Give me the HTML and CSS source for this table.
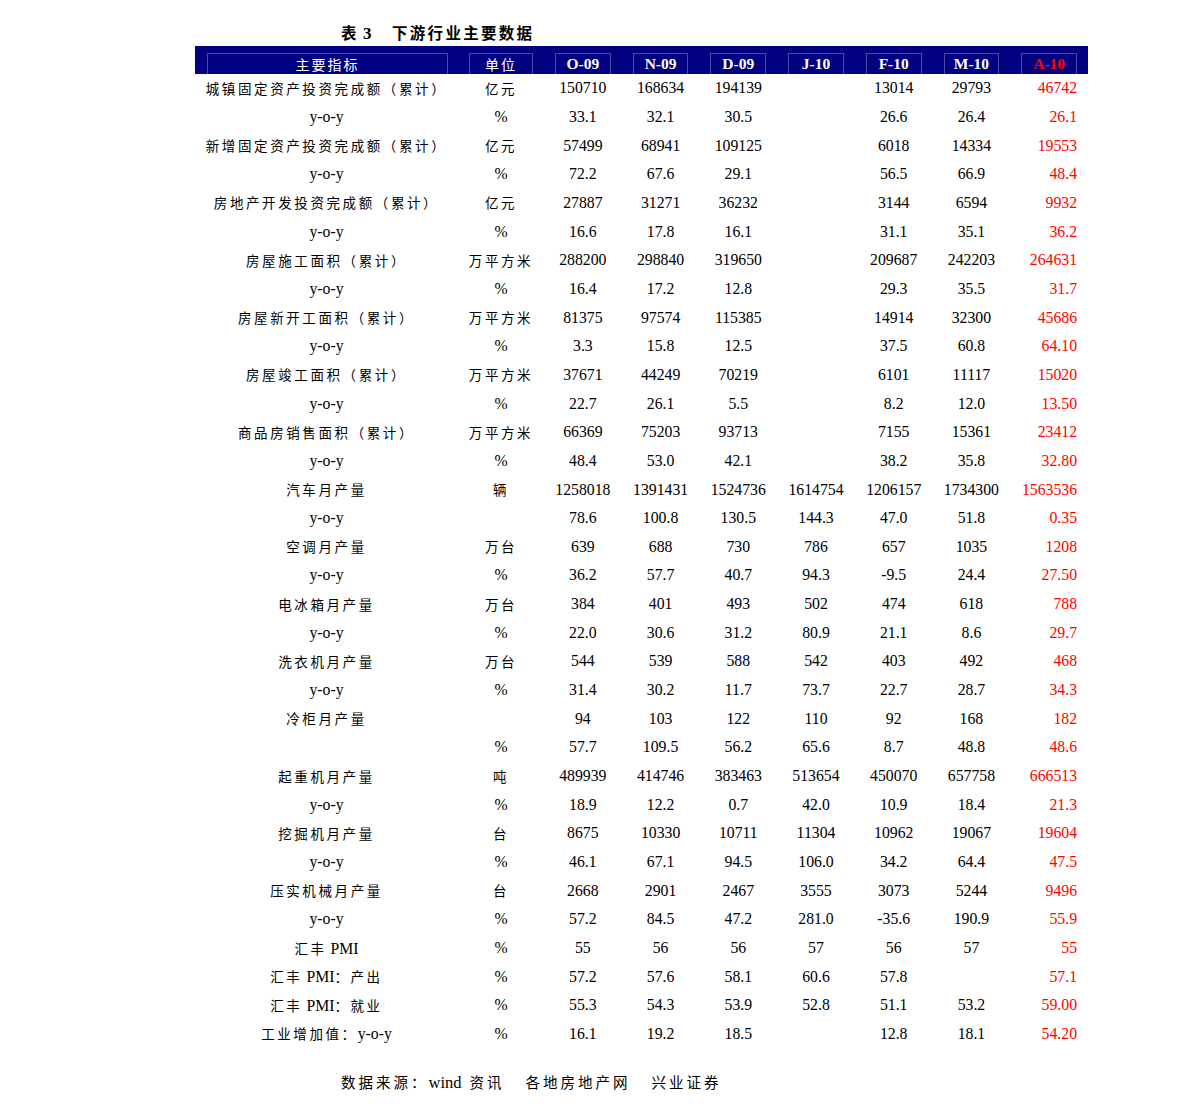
FILE: index.html
```html
<!DOCTYPE html>
<html lang="zh-CN">
<head>
<meta charset="utf-8">
<title>下游行业主要数据</title>
<link rel="stylesheet" href="styles.css">
</head>
<body>
<div class="page">
  <div class="title"><span class="tnum"><span class="tzh">表</span> 3</span><span class="tzh">下游行业主要数据</span></div>
  <div class="table">
    <div class="head">
      <div class="hcell first"><span class="hbox zhh">主要指标</span></div>
      <div class="hcell"><span class="hbox zhh">单位</span></div>
      <div class="hcell"><span class="hbox">O-09</span></div>
      <div class="hcell"><span class="hbox">N-09</span></div>
      <div class="hcell"><span class="hbox">D-09</span></div>
      <div class="hcell"><span class="hbox">J-10</span></div>
      <div class="hcell"><span class="hbox">F-10</span></div>
      <div class="hcell"><span class="hbox">M-10</span></div>
      <div class="hcell"><span class="hbox red">A-10</span></div>
    </div>

    <div class="row"><div class="lbl"><span class="zh">城镇固定资产投资完成额（累计）</span></div><div class="unit"><span class="zh">亿元</span></div><div class="v">150710</div><div class="v">168634</div><div class="v">194139</div><div class="v"></div><div class="v">13014</div><div class="v">29793</div><div class="v last">46742</div></div>
    <div class="row"><div class="lbl">y-o-y</div><div class="unit">%</div><div class="v">33.1</div><div class="v">32.1</div><div class="v">30.5</div><div class="v"></div><div class="v">26.6</div><div class="v">26.4</div><div class="v last">26.1</div></div>
    <div class="row"><div class="lbl"><span class="zh">新增固定资产投资完成额（累计）</span></div><div class="unit"><span class="zh">亿元</span></div><div class="v">57499</div><div class="v">68941</div><div class="v">109125</div><div class="v"></div><div class="v">6018</div><div class="v">14334</div><div class="v last">19553</div></div>
    <div class="row"><div class="lbl">y-o-y</div><div class="unit">%</div><div class="v">72.2</div><div class="v">67.6</div><div class="v">29.1</div><div class="v"></div><div class="v">56.5</div><div class="v">66.9</div><div class="v last">48.4</div></div>
    <div class="row"><div class="lbl"><span class="zh">房地产开发投资完成额（累计）</span></div><div class="unit"><span class="zh">亿元</span></div><div class="v">27887</div><div class="v">31271</div><div class="v">36232</div><div class="v"></div><div class="v">3144</div><div class="v">6594</div><div class="v last">9932</div></div>
    <div class="row"><div class="lbl">y-o-y</div><div class="unit">%</div><div class="v">16.6</div><div class="v">17.8</div><div class="v">16.1</div><div class="v"></div><div class="v">31.1</div><div class="v">35.1</div><div class="v last">36.2</div></div>
    <div class="row"><div class="lbl"><span class="zh">房屋施工面积（累计）</span></div><div class="unit"><span class="zh">万平方米</span></div><div class="v">288200</div><div class="v">298840</div><div class="v">319650</div><div class="v"></div><div class="v">209687</div><div class="v">242203</div><div class="v last">264631</div></div>
    <div class="row"><div class="lbl">y-o-y</div><div class="unit">%</div><div class="v">16.4</div><div class="v">17.2</div><div class="v">12.8</div><div class="v"></div><div class="v">29.3</div><div class="v">35.5</div><div class="v last">31.7</div></div>
    <div class="row"><div class="lbl"><span class="zh">房屋新开工面积（累计）</span></div><div class="unit"><span class="zh">万平方米</span></div><div class="v">81375</div><div class="v">97574</div><div class="v">115385</div><div class="v"></div><div class="v">14914</div><div class="v">32300</div><div class="v last">45686</div></div>
    <div class="row"><div class="lbl">y-o-y</div><div class="unit">%</div><div class="v">3.3</div><div class="v">15.8</div><div class="v">12.5</div><div class="v"></div><div class="v">37.5</div><div class="v">60.8</div><div class="v last">64.10</div></div>
    <div class="row"><div class="lbl"><span class="zh">房屋竣工面积（累计）</span></div><div class="unit"><span class="zh">万平方米</span></div><div class="v">37671</div><div class="v">44249</div><div class="v">70219</div><div class="v"></div><div class="v">6101</div><div class="v">11117</div><div class="v last">15020</div></div>
    <div class="row"><div class="lbl">y-o-y</div><div class="unit">%</div><div class="v">22.7</div><div class="v">26.1</div><div class="v">5.5</div><div class="v"></div><div class="v">8.2</div><div class="v">12.0</div><div class="v last">13.50</div></div>
    <div class="row"><div class="lbl"><span class="zh">商品房销售面积（累计）</span></div><div class="unit"><span class="zh">万平方米</span></div><div class="v">66369</div><div class="v">75203</div><div class="v">93713</div><div class="v"></div><div class="v">7155</div><div class="v">15361</div><div class="v last">23412</div></div>
    <div class="row"><div class="lbl">y-o-y</div><div class="unit">%</div><div class="v">48.4</div><div class="v">53.0</div><div class="v">42.1</div><div class="v"></div><div class="v">38.2</div><div class="v">35.8</div><div class="v last">32.80</div></div>
    <div class="row"><div class="lbl"><span class="zh">汽车月产量</span></div><div class="unit"><span class="zh">辆</span></div><div class="v">1258018</div><div class="v">1391431</div><div class="v">1524736</div><div class="v">1614754</div><div class="v">1206157</div><div class="v">1734300</div><div class="v last">1563536</div></div>
    <div class="row"><div class="lbl">y-o-y</div><div class="unit"></div><div class="v">78.6</div><div class="v">100.8</div><div class="v">130.5</div><div class="v">144.3</div><div class="v">47.0</div><div class="v">51.8</div><div class="v last">0.35</div></div>
    <div class="row"><div class="lbl"><span class="zh">空调月产量</span></div><div class="unit"><span class="zh">万台</span></div><div class="v">639</div><div class="v">688</div><div class="v">730</div><div class="v">786</div><div class="v">657</div><div class="v">1035</div><div class="v last">1208</div></div>
    <div class="row"><div class="lbl">y-o-y</div><div class="unit">%</div><div class="v">36.2</div><div class="v">57.7</div><div class="v">40.7</div><div class="v">94.3</div><div class="v">-9.5</div><div class="v">24.4</div><div class="v last">27.50</div></div>
    <div class="row"><div class="lbl"><span class="zh">电冰箱月产量</span></div><div class="unit"><span class="zh">万台</span></div><div class="v">384</div><div class="v">401</div><div class="v">493</div><div class="v">502</div><div class="v">474</div><div class="v">618</div><div class="v last">788</div></div>
    <div class="row"><div class="lbl">y-o-y</div><div class="unit">%</div><div class="v">22.0</div><div class="v">30.6</div><div class="v">31.2</div><div class="v">80.9</div><div class="v">21.1</div><div class="v">8.6</div><div class="v last">29.7</div></div>
    <div class="row"><div class="lbl"><span class="zh">洗衣机月产量</span></div><div class="unit"><span class="zh">万台</span></div><div class="v">544</div><div class="v">539</div><div class="v">588</div><div class="v">542</div><div class="v">403</div><div class="v">492</div><div class="v last">468</div></div>
    <div class="row"><div class="lbl">y-o-y</div><div class="unit">%</div><div class="v">31.4</div><div class="v">30.2</div><div class="v">11.7</div><div class="v">73.7</div><div class="v">22.7</div><div class="v">28.7</div><div class="v last">34.3</div></div>
    <div class="row"><div class="lbl"><span class="zh">冷柜月产量</span></div><div class="unit"></div><div class="v">94</div><div class="v">103</div><div class="v">122</div><div class="v">110</div><div class="v">92</div><div class="v">168</div><div class="v last">182</div></div>
    <div class="row"><div class="lbl"></div><div class="unit">%</div><div class="v">57.7</div><div class="v">109.5</div><div class="v">56.2</div><div class="v">65.6</div><div class="v">8.7</div><div class="v">48.8</div><div class="v last">48.6</div></div>
    <div class="row"><div class="lbl"><span class="zh">起重机月产量</span></div><div class="unit"><span class="zh">吨</span></div><div class="v">489939</div><div class="v">414746</div><div class="v">383463</div><div class="v">513654</div><div class="v">450070</div><div class="v">657758</div><div class="v last">666513</div></div>
    <div class="row"><div class="lbl">y-o-y</div><div class="unit">%</div><div class="v">18.9</div><div class="v">12.2</div><div class="v">0.7</div><div class="v">42.0</div><div class="v">10.9</div><div class="v">18.4</div><div class="v last">21.3</div></div>
    <div class="row"><div class="lbl"><span class="zh">挖掘机月产量</span></div><div class="unit"><span class="zh">台</span></div><div class="v">8675</div><div class="v">10330</div><div class="v">10711</div><div class="v">11304</div><div class="v">10962</div><div class="v">19067</div><div class="v last">19604</div></div>
    <div class="row"><div class="lbl">y-o-y</div><div class="unit">%</div><div class="v">46.1</div><div class="v">67.1</div><div class="v">94.5</div><div class="v">106.0</div><div class="v">34.2</div><div class="v">64.4</div><div class="v last">47.5</div></div>
    <div class="row"><div class="lbl"><span class="zh">压实机械月产量</span></div><div class="unit"><span class="zh">台</span></div><div class="v">2668</div><div class="v">2901</div><div class="v">2467</div><div class="v">3555</div><div class="v">3073</div><div class="v">5244</div><div class="v last">9496</div></div>
    <div class="row"><div class="lbl">y-o-y</div><div class="unit">%</div><div class="v">57.2</div><div class="v">84.5</div><div class="v">47.2</div><div class="v">281.0</div><div class="v">-35.6</div><div class="v">190.9</div><div class="v last">55.9</div></div>
    <div class="row"><div class="lbl"><span class="zh">汇丰</span> PMI</div><div class="unit">%</div><div class="v">55</div><div class="v">56</div><div class="v">56</div><div class="v">57</div><div class="v">56</div><div class="v">57</div><div class="v last">55</div></div>
    <div class="row"><div class="lbl"><span class="zh">汇丰</span> PMI<span class="zh">：产出</span></div><div class="unit">%</div><div class="v">57.2</div><div class="v">57.6</div><div class="v">58.1</div><div class="v">60.6</div><div class="v">57.8</div><div class="v"></div><div class="v last">57.1</div></div>
    <div class="row"><div class="lbl"><span class="zh">汇丰</span> PMI<span class="zh">：就业</span></div><div class="unit">%</div><div class="v">55.3</div><div class="v">54.3</div><div class="v">53.9</div><div class="v">52.8</div><div class="v">51.1</div><div class="v">53.2</div><div class="v last">59.00</div></div>
    <div class="row"><div class="lbl"><span class="zh">工业增加值：</span>y-o-y</div><div class="unit">%</div><div class="v">16.1</div><div class="v">19.2</div><div class="v">18.5</div><div class="v"></div><div class="v">12.8</div><div class="v">18.1</div><div class="v last">54.20</div></div>
  </div>
  <div class="source"><span class="szh">数据来源：</span>wind<span class="gap0"></span><span class="szh">资讯</span><span class="gap1"></span><span class="szh">各地房地产网</span><span class="gap2"></span><span class="szh">兴业证券</span></div>
</div>
</body>
</html>
```

FILE: styles.css
```css
html, body {
  margin: 0;
  padding: 0;
  background: #ffffff;
}

body {
  font-family: "Liberation Serif", "Noto Sans CJK SC", serif;
  color: #000000;
  font-size: 15.75px;
}

.page {
  width: 893px;
  margin-left: 195px;
}

.title {
  padding-top: 22px;
  padding-left: 146px;
  height: 24px;
  line-height: 20px;
  font-weight: bold;
  font-size: 17px;
  display: flex;
  align-items: flex-start;
}

.title .tzh {
  font-family: "Noto Sans CJK SC", sans-serif;
  font-size: 15.5px;
  letter-spacing: 2.3px;
}

.tnum {
  width: 51px;
}

.table {
  width: 893px;
}

.head {
  display: grid;
  grid-template-columns: 263px 86px repeat(7, 1fr);
  height: 28px;
  background: #000080;
}

.hcell {
  display: flex;
  justify-content: center;
  align-items: flex-end;
  padding: 0 11px;
}

.hcell.first {
  padding: 0 10px 0 12px;
}

.hbox {
  flex: 1;
  height: 20px;
  border: 1px solid #4a4aa6;
  border-bottom: none;
  color: #ffffff;
  font-weight: bold;
  font-size: 15.5px;
  line-height: 20px;
  text-align: center;
}

.hbox.zhh {
  font-family: "Noto Sans CJK SC", sans-serif;
  font-weight: normal;
  font-size: 14px;
  letter-spacing: 2px;
}

.hbox.red {
  color: #ff0000;
}

.row {
  display: grid;
  grid-template-columns: 263px 86px repeat(7, 1fr);
  height: 28.67px;
  align-items: center;
  line-height: 20px;
}

.lbl, .unit, .v {
  text-align: center;
  white-space: nowrap;
}

.v.last {
  text-align: right;
  padding-right: 11px;
  color: #ff0000;
}

.zh {
  font-family: "Noto Sans CJK SC", sans-serif;
  font-size: 13.5px;
  letter-spacing: 2.6px;
}

.source {
  margin-top: 24px;
  padding-left: 146px;
  line-height: 20px;
  font-size: 16.5px;
}

.szh {
  font-family: "Noto Sans CJK SC", sans-serif;
  font-size: 14.5px;
  letter-spacing: 3px;
}

.gap0 {
  display: inline-block;
  width: 8px;
}

.gap1 {
  display: inline-block;
  width: 21px;
}

.gap2 {
  display: inline-block;
  width: 21px;
}
```
